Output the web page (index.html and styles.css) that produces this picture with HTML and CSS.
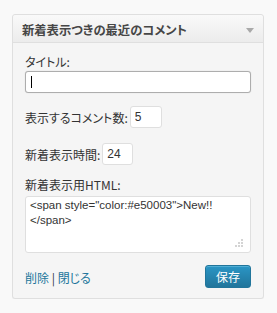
FILE: index.html
```html
<!DOCTYPE html>
<html>
<head>
  <title>Widget</title>
  <link rel="stylesheet" href="styles.css">
</head>
<body>

<div class="widget">
  <div class="widget-top">
    <h3>新着表示つきの最近のコメント</h3>
    <span class="arrow"></span>
  </div>
  <div class="widget-inside">
    <label class="block-label">タイトル:</label>
    <div class="field-wrap">
      <input type="text" class="wide focused" value="">
      <span class="caret"></span>
    </div>

    <div class="row first-row">
      <label>表示するコメント数:</label>
      <input type="text" class="small" value="5">
    </div>

    <div class="row second-row">
      <label>新着表示時間:</label>
      <input type="text" class="small" value="24">
    </div>

    <label class="block-label html-label">新着表示用HTML:</label>
    <div class="field-wrap">
      <textarea class="wide">&lt;span style="color:#e50003"&gt;New!!
&lt;/span&gt;</textarea>
      <svg class="grip" width="8" height="8" viewBox="0 0 8 8">
        <rect x="6" y="0" width="2" height="2" fill="#d4d4d4"/>
        <rect x="3" y="3" width="2" height="2" fill="#d4d4d4"/>
        <rect x="6" y="3" width="2" height="2" fill="#d4d4d4"/>
        <rect x="0" y="6" width="2" height="2" fill="#d4d4d4"/>
        <rect x="3" y="6" width="2" height="2" fill="#d4d4d4"/>
        <rect x="6" y="6" width="2" height="2" fill="#d4d4d4"/>
      </svg>
    </div>

    <div class="widget-control">
      <div class="links">
        <a href="#">削除</a> | <a href="#">閉じる</a>
      </div>
      <button>保存</button>
    </div>
  </div>
</div>

</body>
</html>
```

FILE: styles.css
```css
body {
  margin: 0;
  padding: 14px 0 0 12px;
  background-color: #f9f9f9;
  font-family: "Noto Sans CJK JP", "Liberation Sans", sans-serif;
  font-size: 12px;
  color: #333;
  font-feature-settings: "palt";
}
.widget {
  width: 250px;
  border: 1px solid #dfdfdf;
  border-radius: 3px;
  background-color: #f5f5f5;
  box-shadow: 0 1px 0 rgba(0,0,0,0.03);
}
.widget-top {
  height: 27px;
  display: flex;
  align-items: center;
  justify-content: space-between;
  padding: 0 9px 0 9px;
  background: linear-gradient(to bottom, #f9f9f9, #ececec);
  border-bottom: 1px solid #dfdfdf;
  border-radius: 3px 3px 0 0;
}
.widget-top h3 {
  margin: 0;
  font-size: 12.3px;
  font-weight: 700;
  color: #464646;
  line-height: 16px;
  padding-top: 2px;
}
.arrow {
  width: 0;
  height: 0;
  border-left: 4px solid transparent;
  border-right: 4px solid transparent;
  border-top: 5px solid #a9a9a9;
  margin-top: 3px;
}
.widget-inside {
  padding: 11px 12px 10px 12px;
}
.block-label {
  display: block;
  line-height: 16px;
  margin-bottom: 1px;
}
.field-wrap {
  position: relative;
}
input, textarea {
  box-sizing: border-box;
  border: 1px solid #dfdfdf;
  border-radius: 3px;
  background-color: #fff;
  font-family: "Liberation Sans", "Noto Sans CJK JP", sans-serif;
  font-size: 12px;
  color: #333;
  outline: none;
  margin: 0;
}
input.wide {
  display: block;
  width: 226px;
  height: 22px;
  padding: 2px 5px;
}
input.focused {
  border-color: #adadad;
  box-shadow: 0 0 1px rgba(0,0,0,0.2);
}
.caret {
  position: absolute;
  left: 6px;
  top: 5px;
  width: 1px;
  height: 12px;
  background-color: #000;
}
.row {
  display: flex;
  align-items: center;
  height: 22px;
}
.row label {
  margin-right: 2px;
}
.first-row {
  margin-top: 13px;
}
.second-row {
  margin-top: 15px;
}
input.small {
  width: 32px;
  height: 22px;
  padding: 2px 4px;
}
.second-row input.small {
  width: 31px;
}
.html-label {
  margin-top: 12px;
  margin-bottom: 3px;
}
textarea {
  display: block;
  width: 226px;
  height: 57px;
  padding: 1px 4px;
  line-height: 15px;
  resize: none;
  font-family: "Liberation Sans", sans-serif;
  font-size: 11.5px;
}
.grip {
  position: absolute;
  right: 8px;
  bottom: 6px;
}
.widget-control {
  margin-top: 12px;
  display: flex;
  justify-content: space-between;
  align-items: center;
}
.links {
  font-size: 12px;
  color: #333;
  padding-top: 1px;
}
.links a {
  color: #21759b;
  text-decoration: none;
}
button {
  width: 46px;
  height: 23px;
  border: 1px solid #21759b;
  border-radius: 3px;
  background: linear-gradient(to bottom, #2a95c5, #21759b);
  color: #fff;
  font-family: "Noto Sans CJK JP", sans-serif;
  font-size: 12px;
  padding: 0;
  margin-right: 0;
  box-shadow: inset 0 1px 0 rgba(120,200,230,0.5);
}
```
